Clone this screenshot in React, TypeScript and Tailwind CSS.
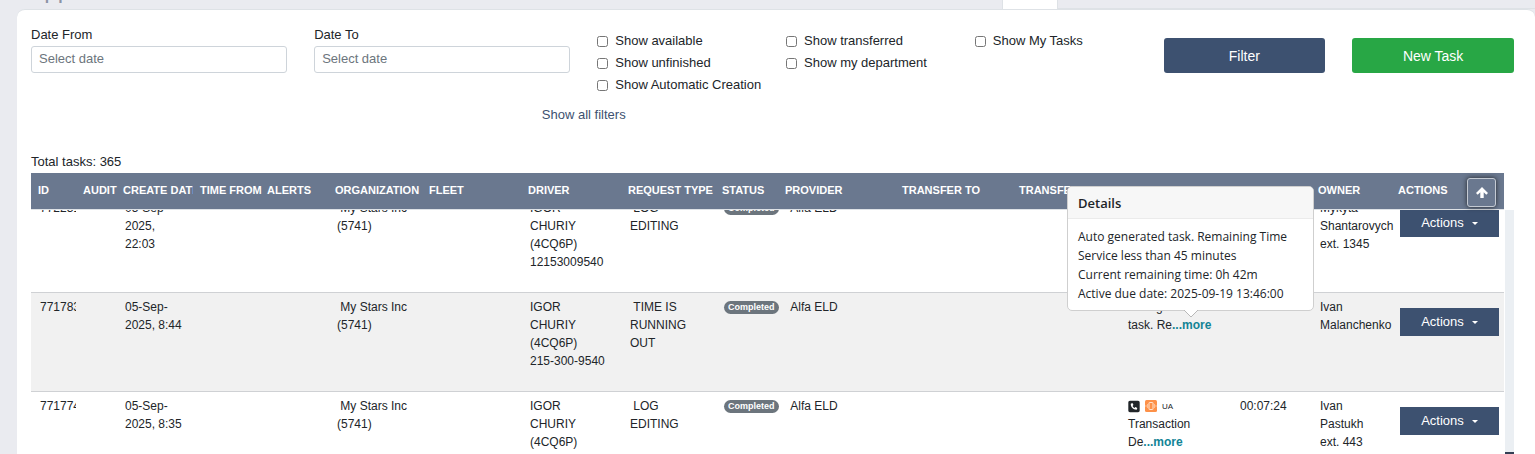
import { FaSquarePhone } from "react-icons/fa6";

type Task = {
  id: string;
  created: string[];
  organization: string[];
  driver: string[];
  requestType: string[];
  status: string;
  provider: string;
  details: string[];
  call?: boolean;
  spent: string;
  owner: string[];
};

const COLUMNS = [
  { label: "ID", width: 45 },
  { label: "AUDIT", width: 40 },
  { label: "CREATE DATE", width: 77, clip: true },
  { label: "TIME FROM", width: 67 },
  { label: "ALERTS", width: 68 },
  { label: "ORGANIZATION", width: 94 },
  { label: "FLEET", width: 99 },
  { label: "DRIVER", width: 100 },
  { label: "REQUEST TYPE", width: 94 },
  { label: "STATUS", width: 63 },
  { label: "PROVIDER", width: 117 },
  { label: "TRANSFER TO", width: 117 },
  { label: "TRANSFER REASON", width: 107, clip: true },
  { label: "TASK DETAILS", width: 110 },
  { label: "SPENT TIME", width: 82 },
  { label: "OWNER", width: 80 },
  { label: "ACTIONS", width: 113 },
];

const TASKS: Task[] = [
  {
    id: "772231",
    created: ["05-Sep-", "2025,", "22:03"],
    organization: ["\u00a0My Stars Inc", "(5741)"],
    driver: ["IGOR", "CHURIY", "(4CQ6P)", "12153009540"],
    requestType: ["\u00a0LOG", "EDITING"],
    status: "Completed",
    provider: "Alfa ELD",
    details: [],
    spent: "",
    owner: ["Mykyta", "Shantarovych", "ext. 1345"],
  },
  {
    id: "771783",
    created: ["05-Sep-", "2025, 8:44"],
    organization: ["\u00a0My Stars Inc", "(5741)"],
    driver: ["IGOR", "CHURIY", "(4CQ6P)", "215-300-9540"],
    requestType: ["\u00a0TIME IS", "RUNNING", "OUT"],
    status: "Completed",
    provider: "Alfa ELD",
    details: ["Auto generated", "task. Re"],
    spent: "00:00:04",
    owner: ["Ivan", "Malanchenko"],
  },
  {
    id: "771774",
    created: ["05-Sep-", "2025, 8:35"],
    organization: ["\u00a0My Stars Inc", "(5741)"],
    driver: ["IGOR", "CHURIY", "(4CQ6P)", "12153009540"],
    requestType: ["\u00a0LOG", "EDITING"],
    status: "Completed",
    provider: "Alfa ELD",
    details: ["Transaction", "De"],
    call: true,
    spent: "00:07:24",
    owner: ["Ivan", "Pastukh", "ext. 443"],
  },
];

const CHECKBOX_GROUPS = [
  ["Show available", "Show unfinished", "Show Automatic Creation"],
  ["Show transferred", "Show my department"],
  ["Show My Tasks"],
];

function ColGroup() {
  return (
    <colgroup>
      {COLUMNS.map((c) => (
        <col key={c.label} style={{ width: c.width }} />
      ))}
    </colgroup>
  );
}

function Lines({ items }: { items: string[] }) {
  return (
    <>
      {items.map((line, i) => (
        <span key={i} className="block">
          {line}
        </span>
      ))}
    </>
  );
}

function DateField({ id, label }: { id: string; label: string }) {
  return (
    <div className="col-span-3">
      <label htmlFor={id} className="block leading-[18px]">
        {label}
      </label>
      <input
        id={id}
        type="text"
        placeholder="Select date"
        className="mt-0.5 block h-[27px] w-full rounded-[3px] border border-[#ced4da] bg-white px-[7px] pb-0.5 placeholder:text-[#6c757d]"
      />
    </div>
  );
}

function VibrateIcon() {
  return (
    <svg viewBox="0 0 24 24" className="size-3" aria-hidden="true">
      <rect width="24" height="24" rx="3" fill="#fd9149" />
      <rect x="8" y="5" width="8" height="14" rx="1" fill="none" stroke="#ffe3cf" strokeWidth="2" />
      <path d="M5 8v8M2 10v4M19 8v8M22 10v4" stroke="#ffd0ae" strokeWidth="1.5" />
    </svg>
  );
}

function ArrowUpIcon() {
  return (
    <svg viewBox="0 0 12 11" className="h-[11px] w-3" fill="currentColor" aria-hidden="true">
      <path d="M6 0L12 6L10.300 7.700L7.700 5.200V11H4.300V5.200L1.700 7.700L0 6Z" />
    </svg>
  );
}

function TaskRow({ task }: { task: Task }) {
  return (
    <tr className="h-[99px] border-t border-[#cfd1d4] align-top even:bg-[#f1f1f1] [&>td]:pt-[5px] [&>td]:pl-[9px] [&>td]:whitespace-nowrap">
      <td className="overflow-hidden">{task.id}</td>
      <td />
      <td>
        <Lines items={task.created} />
      </td>
      <td />
      <td />
      <td>
        <Lines items={task.organization} />
      </td>
      <td />
      <td>
        <Lines items={task.driver} />
      </td>
      <td>
        <Lines items={task.requestType} />
      </td>
      <td>
        <span className="mt-[3px] inline-block h-[13px] rounded-full bg-[#6c757d] px-1 align-top text-[9px] leading-[13px] font-bold text-white">
          {task.status}
        </span>
      </td>
      <td>{"\u00a0" + task.provider}</td>
      <td />
      <td />
      <td>
        {task.call && (
          <span className="flex h-[18px] items-center gap-[5px]">
            <FaSquarePhone className="h-[13px] w-3 text-[#212529]" />
            <VibrateIcon />
            <span className="pt-0.5 text-[8px]">UA</span>
          </span>
        )}
        {task.details.length > 0 && (
          <>
            <span className="block">{task.details[0]}</span>
            <span className="block">
              {task.details[1]}
              <a href="#details" className="font-bold text-[#138496]">
                ...more
              </a>
            </span>
          </>
        )}
      </td>
      <td>
        <span className="pl-0.5">{task.spent}</span>
      </td>
      <td>
        <Lines items={task.owner} />
      </td>
      <td className="pr-[5px]">
        <button
          type="button"
          className="mt-2.5 flex h-7 w-full items-center justify-center gap-2 bg-[#3d5170] text-[13px] text-white"
        >
          Actions
          <span className="border-x-[3px] border-t-[3px] border-x-transparent" />
        </button>
      </td>
    </tr>
  );
}

function DetailsPopover() {
  return (
    <div
      role="tooltip"
      className="absolute top-[13px] right-[200px] z-20 w-[247px] rounded-[5px] border border-[#cfcfcf] bg-white font-['Open_Sans','Noto_Sans',sans-serif] text-xs text-[#212529]"
    >
      <h3 className="rounded-t-[4px] border-b border-[#ebebeb] bg-[#f7f7f7] px-2.5 pt-[7px] pb-1.5 text-[13px] leading-[18px] font-semibold">
        Details
      </h3>
      <div className="px-2.5 pt-2 pb-[7px] leading-[19px] whitespace-nowrap">
        <p>Auto generated task. Remaining Time</p>
        <p>Service less than 45 minutes</p>
        <p>Current remaining time: 0h 42m</p>
        <p>Active due date: 2025-09-19 13:46:00</p>
      </div>
      <svg viewBox="0 0 16 8" className="absolute top-full left-1/2 h-2 w-4 -translate-x-1/2" aria-hidden="true">
        <path d="M0 -1L8 7L16 -1" fill="#fff" stroke="#b8b8b8" />
      </svg>
    </div>
  );
}

export default function App() {
  return (
    <div className="flex h-screen flex-col overflow-hidden bg-[#eaebf0] font-['Liberation_Sans',Arial,sans-serif] text-[13px] text-[#212529]">
      <header className="flex h-[9px] shrink-0 justify-between">
        <div className="flex flex-col justify-end overflow-hidden pb-1.5 pl-[15px]">
          <h1 className="text-2xl leading-[26px] text-[#8b93a5]">Support</h1>
        </div>
        <div className="flex w-[533px]">
          <div className="w-14 border-x border-[#dee2e6] bg-white" />
          <div className="flex-1 border-b border-[#dee2e6]" />
        </div>
      </header>

      <main className="ml-[17px] flex min-h-0 flex-1 flex-col rounded-t-lg border-t border-[#dee2e6] bg-white pt-4 pr-[21px] pl-3.5">
        <form className="grid grid-cols-16 gap-x-[27px]">
          <DateField id="date-from" label="Date From" />
          <DateField id="date-to" label="Date To" />
          {CHECKBOX_GROUPS.map((group) => (
            <div key={group[0]} className="col-span-2 pt-1">
              {group.map((label) => (
                <label key={label} className="flex h-[22px] items-center gap-[7px] whitespace-nowrap">
                  <input type="checkbox" className="size-[11px]" />
                  {label}
                </label>
              ))}
            </div>
          ))}
          <button
            type="button"
            className="col-span-2 mt-3 h-[35px] rounded-[3px] bg-[#3d5170] text-sm text-white"
          >
            Filter
          </button>
          <button
            type="button"
            className="col-span-2 mt-3 h-[35px] rounded-[3px] bg-[#28a745] text-sm text-white"
          >
            New Task
          </button>
          <div className="col-span-12 mt-[9px] text-center">
            <a href="#filters" className="leading-5 text-[#3d5170]">
              Show all filters
            </a>
          </div>
        </form>

        <p className="mt-[27px] mb-px leading-5">Total tasks: 365</p>

        <section className="relative flex min-h-0 flex-1 flex-col">
          <div className="mr-2.5 shrink-0 border-b border-[#dee2e6] bg-[#6a788f]">
            <table className="w-full table-fixed">
              <ColGroup />
              <thead>
                <tr className="h-9 text-left text-[11px] text-white">
                  {COLUMNS.map((c) => (
                    <th
                      key={c.label}
                      className={`pb-0.5 pl-[7px] font-bold whitespace-nowrap ${c.clip ? "overflow-hidden" : ""}`}
                    >
                      {c.label}
                    </th>
                  ))}
                </tr>
              </thead>
            </table>
          </div>

          <div className="flex min-h-0 flex-1">
            {/* list is scrolled a few pixels under the header */}
            <div className="min-w-0 flex-1 overflow-hidden">
              <table className="-mt-[17px] w-full table-fixed border-collapse text-xs leading-[18px]">
                <ColGroup />
                <tbody>
                  {TASKS.map((task) => (
                    <TaskRow key={task.id} task={task} />
                  ))}
                </tbody>
              </table>
            </div>
            <div className="ml-px flex w-[9px] flex-col justify-end bg-[#ebeff3]">
              <div className="h-0.5 bg-[#333f54]" />
            </div>
          </div>

          <button
            type="button"
            aria-label="Scroll to top"
            className="absolute top-[5px] right-[18px] z-10 flex size-[29px] items-center justify-center rounded-[3px] border border-[#c4cad3] bg-[#6a788f] text-white shadow-[0_0_5px_#212529]"
          >
            <ArrowUpIcon />
          </button>

          <DetailsPopover />
        </section>
      </main>
    </div>
  );
}
